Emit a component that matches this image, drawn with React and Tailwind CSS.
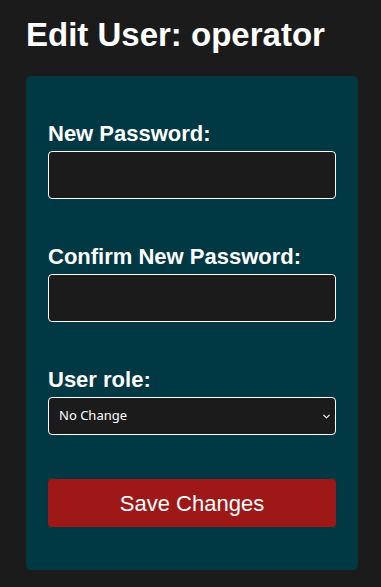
import { ChevronDown } from "lucide-react";

function Field({ label, children, className = "" }) {
  return (
    <div className={"flex flex-col " + className}>
      <label className="text-[22px] font-bold leading-[25px] text-white mb-[5px]">
        {label}
      </label>
      {children}
    </div>
  );
}

export default function App() {
  return (
    <div
      className="min-h-screen bg-[#1b1b1b] px-[26px] pt-[16px] pb-[17px]"
      style={{ fontFamily: '"Liberation Sans", Arial, sans-serif' }}
    >
      <h1 className="text-[33px] font-bold leading-[38px] text-white mb-[22px]">
        Edit User: operator
      </h1>

      <div className="w-[332px] rounded-[5px] bg-[#003844] px-[22px] pt-[45px] pb-[43px]">
        <Field label="New Password:">
          <input
            type="password"
            className="h-[48px] w-full rounded-[4px] border border-white bg-[#1b1b1b] px-2 text-white outline-none"
          />
        </Field>

        <Field label="Confirm New Password:" className="mt-[45px]">
          <input
            type="password"
            className="h-[48px] w-full rounded-[4px] border border-white bg-[#1b1b1b] px-2 text-white outline-none"
          />
        </Field>

        <Field label="User role:" className="mt-[45px]">
          <div className="relative">
            <select
              defaultValue="none"
              className="h-[38px] w-full appearance-none rounded-[4px] border border-white bg-[#1b1b1b] pl-[10px] text-[13px] text-white outline-none"
              style={{ fontFamily: '"Noto Sans", "DejaVu Sans", sans-serif' }}
            >
              <option value="none">No Change</option>
              <option value="admin">Admin</option>
              <option value="operator">Operator</option>
            </select>
            <ChevronDown
              size={11}
              strokeWidth={2.5}
              className="pointer-events-none absolute right-[4px] top-[14px] text-white"
            />
          </div>
        </Field>

        <button className="mt-[44px] h-[48px] w-full rounded-[4px] bg-[#9e1818] text-[22px] text-white">
          Save Changes
        </button>
      </div>
    </div>
  );
}
